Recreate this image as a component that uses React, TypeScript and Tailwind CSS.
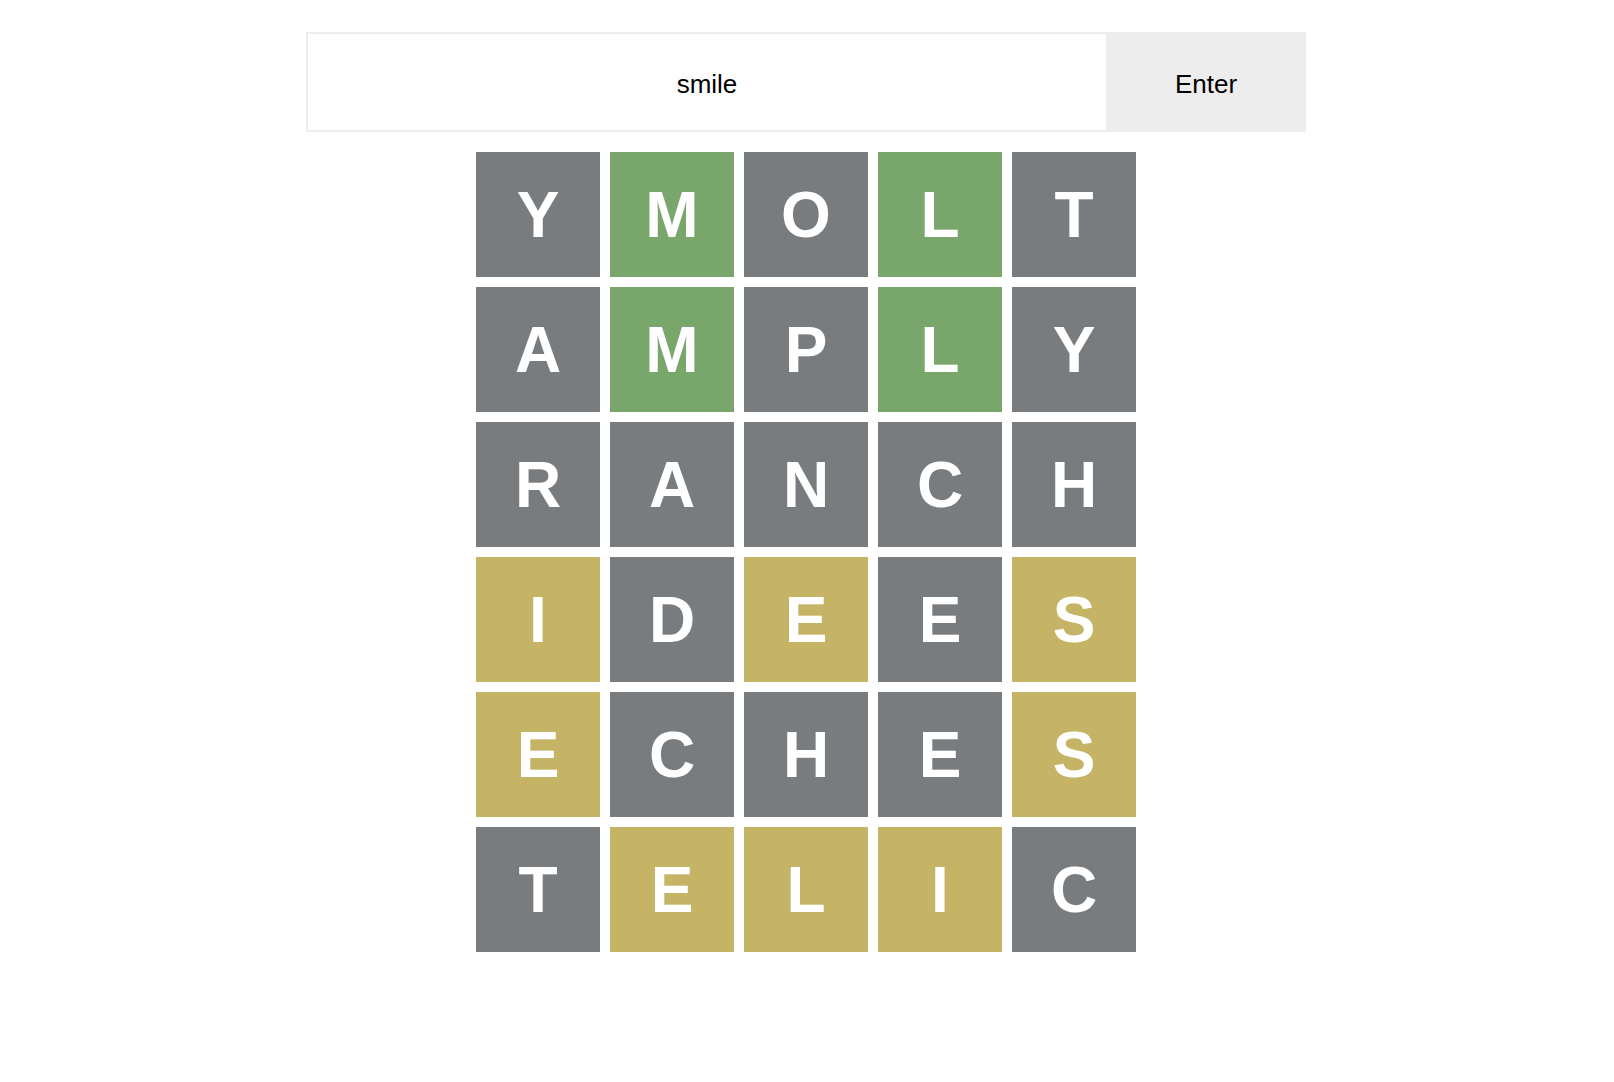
import React from 'react';

type Mark = 'g' | 'y' | 'x';

const rows: { word: string; marks: Mark[] }[] = [
    { word: 'YMOLT', marks: ['x', 'g', 'x', 'g', 'x'] },
    { word: 'AMPLY', marks: ['x', 'g', 'x', 'g', 'x'] },
    { word: 'RANCH', marks: ['x', 'x', 'x', 'x', 'x'] },
    { word: 'IDEES', marks: ['y', 'x', 'y', 'x', 'y'] },
    { word: 'ECHES', marks: ['y', 'x', 'x', 'x', 'y'] },
    { word: 'TELIC', marks: ['x', 'y', 'y', 'y', 'x'] },
];

const tileColor: Record<Mark, string> = {
    g: 'bg-[#79a76b]',
    y: 'bg-[#c5b465]',
    x: 'bg-[#787c7e]',
};

function Tile({ letter, mark }: { letter: string; mark: Mark }) {
    return (
        <div className={`${tileColor[mark]} w-[124px] h-[125px] flex items-center justify-center`}>
            <span className="text-white text-[64px] font-bold leading-none">{letter}</span>
        </div>
    );
}

export default function App() {
    return (
        <div className="min-h-screen bg-white font-['Liberation_Sans',Arial,sans-serif]">
            <div className="w-[1000px] ml-[306px] pt-[32px]">
                <div className="flex h-[100px] border-2 border-[#ececec]">
                    <input
                        className="flex-1 pt-[4px] text-center text-[26px] text-black outline-none bg-white"
                        defaultValue="smile"
                    />
                    <button className="w-[200px] pt-[4px] bg-[#ededed] text-[26px] text-black -my-[2px] -mr-[2px]">Enter</button>
                </div>

                <div className="mt-[20px] flex flex-col items-center gap-[10px]">
                    {rows.map((row, i) => (
                        <div key={i} className="flex gap-[10px]">
                            {row.word.split('').map((ch, j) => (
                                <Tile key={j} letter={ch} mark={row.marks[j]} />
                            ))}
                        </div>
                    ))}
                </div>
            </div>
        </div>
    );
}
